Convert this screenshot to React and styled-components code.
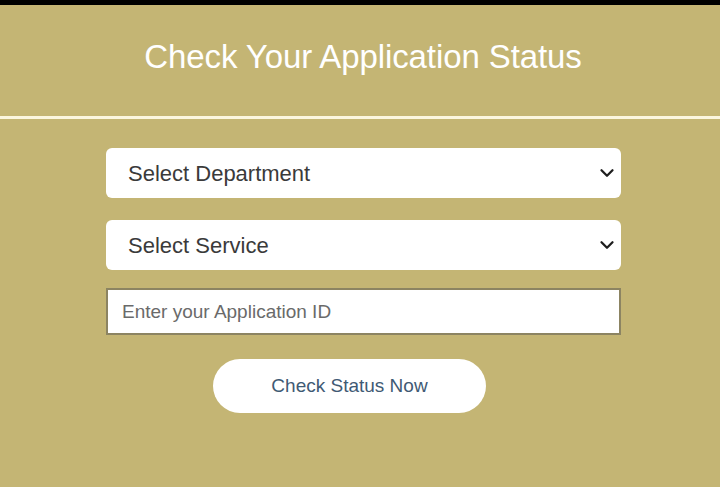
import styled, { createGlobalStyle } from 'styled-components';
import { ChevronDown } from 'lucide-react';

const EstilosGlobales = createGlobalStyle`
  html, body {
    margin: 0;
    padding: 0;
    background: #c4b574;
  }

  body {
    font-family: 'Liberation Sans', Arial, sans-serif;
  }

  * {
    box-sizing: border-box;
  }
`;

const SelectCampo = ({ texto }) => (
  <SelectContenedor>
    <Select defaultValue=''>
      <option value=''>{texto}</option>
    </Select>
    <Flecha>
      <ChevronDown size={22} strokeWidth={2.5}/>
    </Flecha>
  </SelectContenedor>
);

const App = () => {
  return(<>
    <EstilosGlobales/>
    <Pagina>
      <Cabecera>
        <Titulo>Check Your Application Status</Titulo>
      </Cabecera>
      <Linea/>
      <Formulario onSubmit={(e) => e.preventDefault()}>
        <SelectCampo texto='Select Department'/>
        <SelectCampo texto='Select Service'/>
        <Entrada type='text' placeholder='Enter your Application ID'/>
        <Boton type='submit'>Check Status Now</Boton>
      </Formulario>
    </Pagina>
  </>);
};

export default App;

const Pagina = styled.div`
  background: #c4b574;
  border-top: 5px solid #000000;
  display: flex;
  flex-direction: column;
  min-height: 487px;
  width: 100%;
`;

const Cabecera = styled.header`
  align-items: center;
  display: flex;
  height: 111px;
  justify-content: center;
  padding: 0 0 8px 6px;
`;

const Titulo = styled.h1`
  color: #ffffff;
  font-family: 'Liberation Sans', Arial, sans-serif;
  font-size: 33px;
  font-weight: 400;
  letter-spacing: -0.1px;
  margin: 0;
`;

const Linea = styled.hr`
  background: #fbf6df;
  border: none;
  height: 3px;
  margin: 0;
  width: 100%;
`;

const Formulario = styled.form`
  align-items: flex-start;
  display: flex;
  flex-direction: column;
  margin: 29px 0 0 106px;
  width: 515px;
`;

const SelectContenedor = styled.div`
  margin-bottom: 22px;
  position: relative;
  width: 100%;

  &:nth-of-type(2) {
    margin-bottom: 18px;
  };
`;

const Select = styled.select`
  appearance: none;
  background: #ffffff;
  border: none;
  border-radius: 6px;
  color: #3a3a3a;
  font-family: 'Liberation Sans', Arial, sans-serif;
  font-size: 22px;
  height: 50px;
  outline: none;
  padding: 0 40px 0 22px;
  width: 100%;
`;

const Flecha = styled.span`
  color: #1e1e1e;
  display: flex;
  pointer-events: none;
  position: absolute;
  right: 3px;
  top: 50%;
  transform: translateY(-50%);
`;

const Entrada = styled.input`
  background: #ffffff;
  border: 2px solid #8c8462;
  border-radius: 0;
  color: #333333;
  font-family: 'Liberation Sans', Arial, sans-serif;
  font-size: 19px;
  height: 47px;
  outline: none;
  padding: 0 14px;
  width: 100%;

  &::placeholder {
    color: #6a6a6a;
  };
`;

const Boton = styled.button`
  background: #ffffff;
  border: none;
  border-radius: 27px;
  color: #3f5a74;
  cursor: pointer;
  font-family: 'Liberation Sans', Arial, sans-serif;
  font-size: 19px;
  height: 54px;
  margin: 24px 0 0 107px;
  width: 273px;
`;
